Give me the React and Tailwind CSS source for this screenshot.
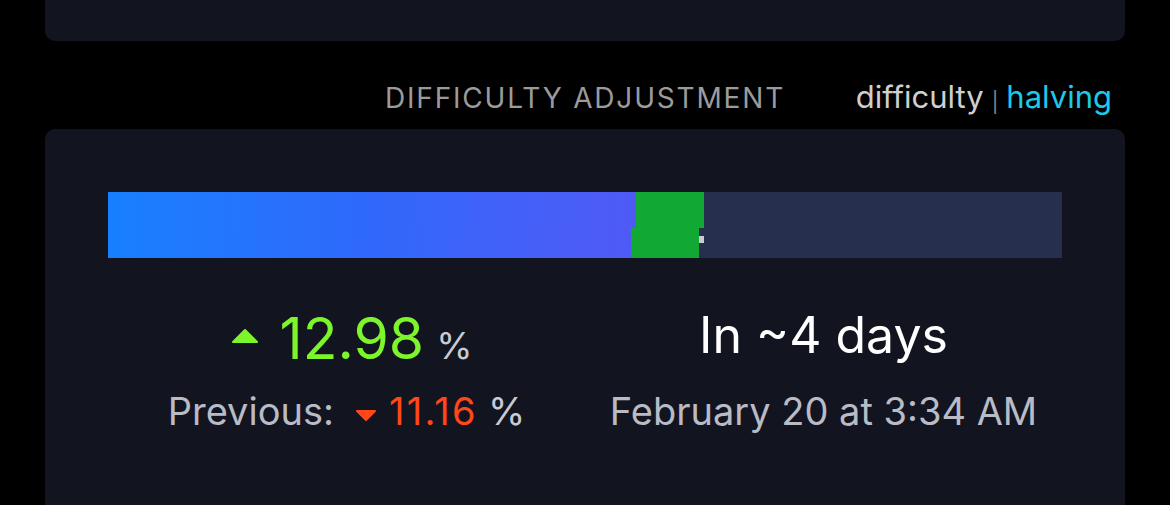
export default function App() {
  const font = { fontFamily: 'Inter, "Noto Sans", sans-serif' };
  return (
    <div className="w-[1170px] h-[505px] bg-black overflow-hidden" style={font}>
      <div className="mx-[45px] h-[41px] bg-[#121420] rounded-b-[10px]" />
      <div className="grid grid-cols-[1fr_auto_1fr] items-end mx-[45px] h-[88px] pb-[17px]">
        <div />
        <div className="text-[28px] leading-none tracking-[0.065em] text-[#9b9b9b]">DIFFICULTY ADJUSTMENT</div>
        <div className="flex justify-end items-end pr-[13px] text-[31px] leading-none">
          <span className="text-[#cfcfcf]">difficulty</span>
          <span className="text-[#8a8a8a] text-[20px] mx-[8px]">|</span>
          <span className="text-[#1fc8e6]">halving</span>
        </div>
      </div>
      <div className="mx-[45px] h-[400px] bg-[#121420] rounded-t-[10px] px-[63px] pt-[63px]">
        <div className="flex flex-col h-[66px]">
          <div className="flex h-[36px]">
            <div className="w-[528px] bg-gradient-to-r from-[#1680ff] via-[#2f68fb] to-[#4f5af6]" />
            <div className="w-[68px] bg-[#11a934]" />
            <div className="flex-1 bg-[#272f4e]" />
          </div>
          <div className="flex h-[30px]">
            <div className="w-[523px] bg-gradient-to-r from-[#1680ff] via-[#2f68fb] to-[#4f5af6]" />
            <div className="w-[68px] bg-[#11a934]" />
            <div className="flex-1 bg-[#272f4e]">
              <div className="w-[5px] h-[7px] mt-[8px] bg-[#c9ccd6]" />
            </div>
          </div>
        </div>
        <div className="grid grid-cols-2 mt-[52px]">
          <div className="flex flex-col items-center">
            <div className="flex items-baseline h-[70px] pl-[11px]">
              <svg width="26" height="14" viewBox="0 0 26 14" className="mr-[22px] self-start mt-[19px]">
                <path d="M13 1 L25 13 L1 13 Z" fill="#7cf52a" stroke="#7cf52a" strokeWidth="2" strokeLinejoin="round" />
              </svg>
              <span className="text-[57px] leading-none text-[#7cf52a]">12.98</span>
              <span className="text-[37px] leading-none text-[#c9cad2] ml-[12px]">%</span>
            </div>
            <div className="flex items-baseline mt-[4px]">
              <span className="text-[38px] leading-[54px] text-[#b9bbc5]">Previous:</span>
              <svg width="20" height="11" viewBox="0 0 20 11" className="ml-[22px] mr-[13px] self-start mt-[26px]">
                <path d="M1 1 L19 1 L10 10 Z" fill="#ff4719" stroke="#ff4719" strokeWidth="2" strokeLinejoin="round" />
              </svg>
              <span className="text-[38px] leading-[54px] text-[#ff4719] tracking-[0.06em]">11.16</span>
              <span className="text-[38px] leading-[54px] text-[#c9cad2] ml-[10px]">%</span>
            </div>
          </div>
          <div className="flex flex-col items-center">
            <div className="flex items-baseline h-[70px]">
              <span className="text-[50px] leading-none text-white">In ~4 days</span>
            </div>
            <div className="mt-[4px] text-[38px] leading-[54px] text-[#b9bbc5]">February 20 at 3:34 AM</div>
          </div>
        </div>
      </div>
    </div>
  );
}
